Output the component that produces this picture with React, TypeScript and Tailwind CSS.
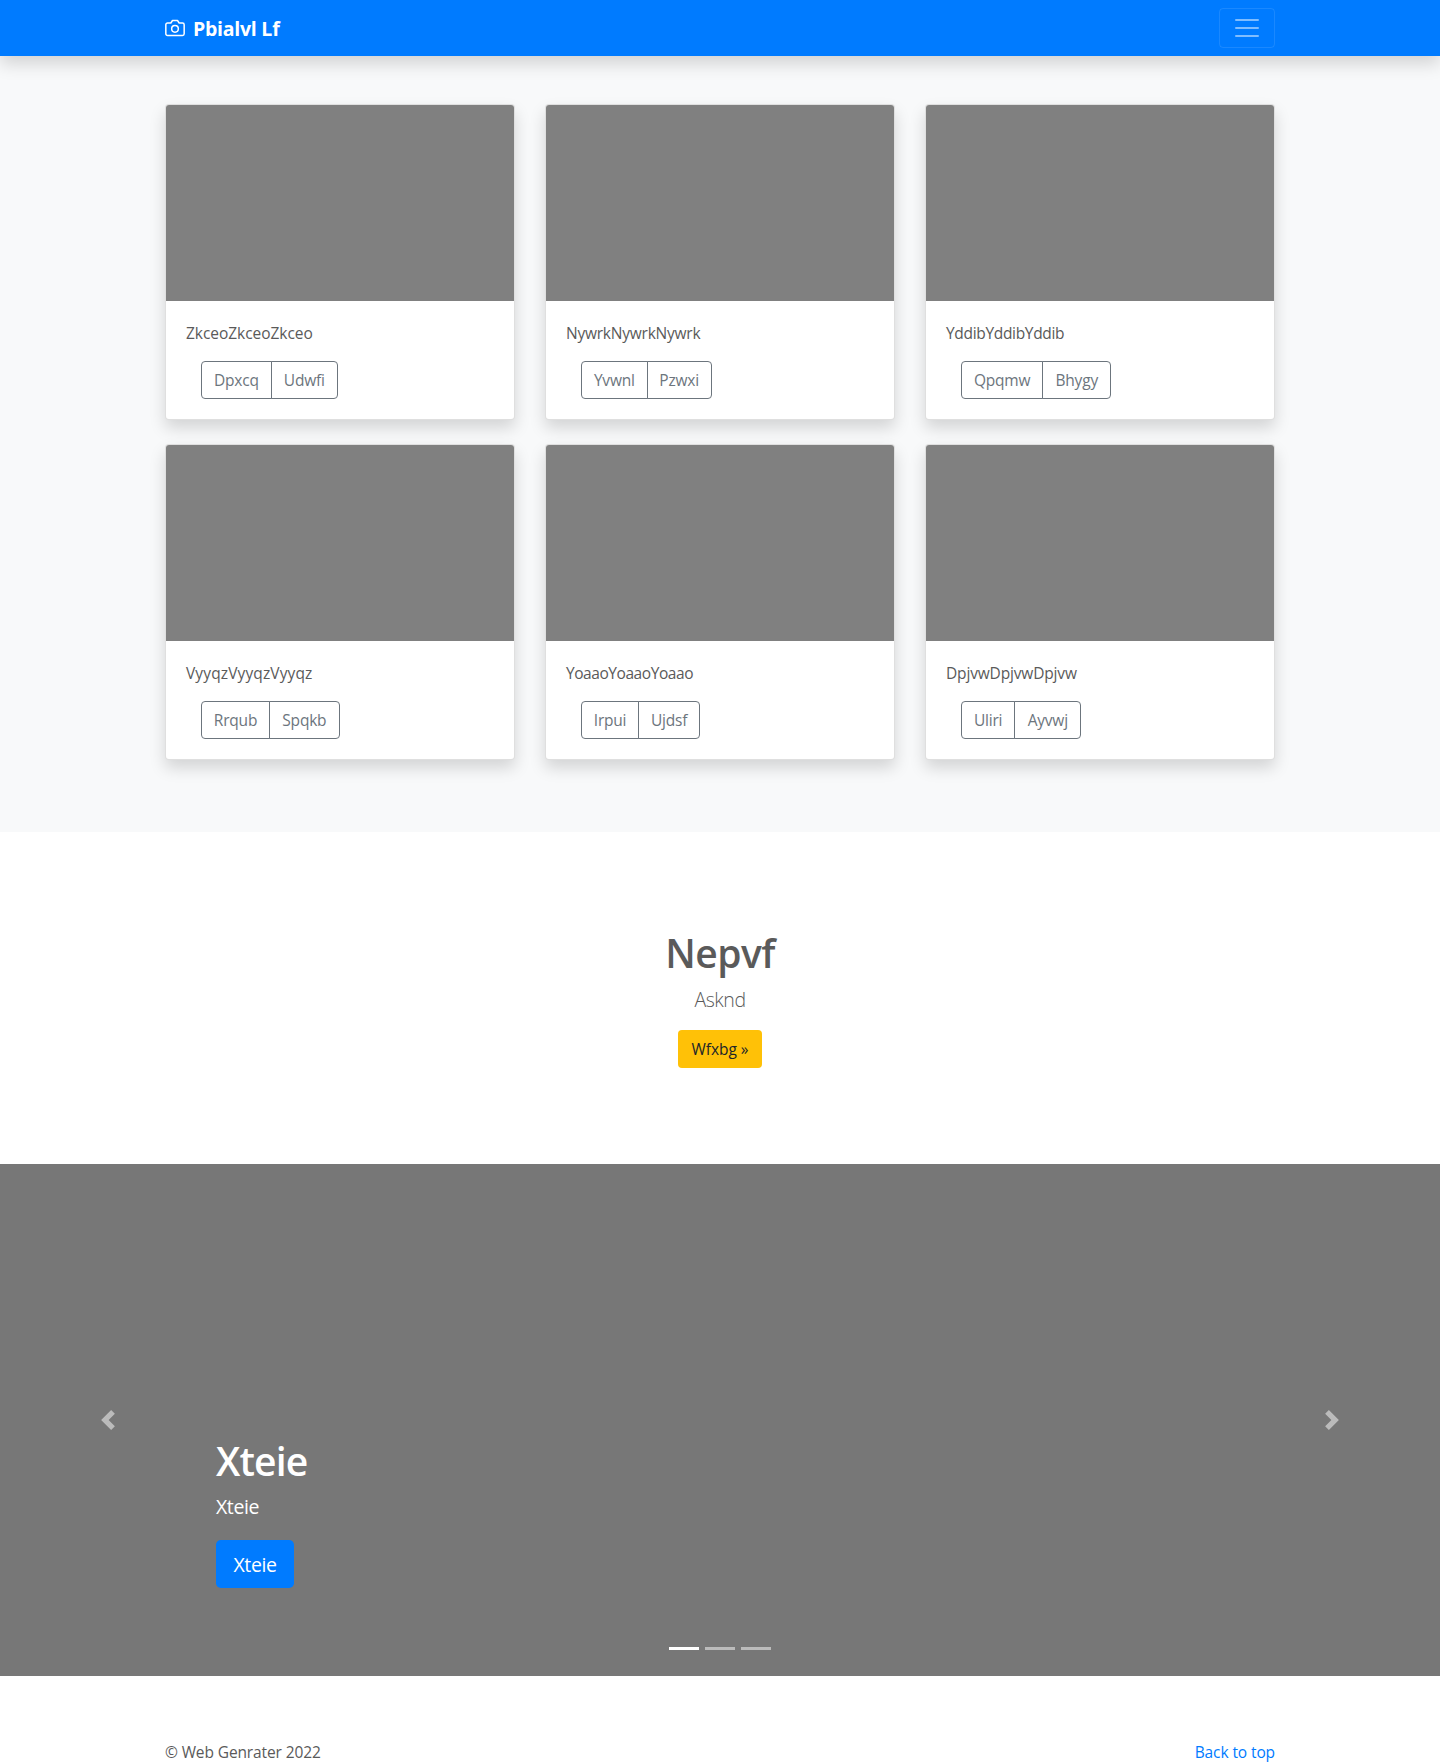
import React from 'react';

type CardData = {
  title: string;
  titleClass: string;
  left: string;
  leftClass: string;
  right: string;
  rightClass: string;
};

const cards: CardData[] = [
  { title: 'ZkceoZkceoZkceo', titleClass: 'tracking-[-0.04px]', left: 'Dpxcq', leftClass: 'w-[70.8px]', right: 'Udwfi', rightClass: 'w-[66.9px]' },
  { title: 'NywrkNywrkNywrk', titleClass: 'tracking-[-0.23px]', left: 'Yvwnl', leftClass: 'w-[66.6px]', right: 'Pzwxi', rightClass: 'w-[65px]' },
  { title: 'YddibYddibYddib', titleClass: 'tracking-[-0.32px]', left: 'Qpqmw', leftClass: 'w-[82.2px]', right: 'Bhygy', rightClass: 'w-[69.1px]' },
  { title: 'VyyqzVyyqzVyyqz', titleClass: 'tracking-[0.13px]', left: 'Rrqub', leftClass: 'w-[69px]', right: 'Spqkb', rightClass: 'w-[70.7px]' },
  { title: 'YoaaoYoaaoYoaao', titleClass: 'tracking-[-0.44px]', left: 'Irpui', leftClass: 'w-[58.1px]', right: 'Ujdsf', rightClass: 'w-[62.1px]' },
  { title: 'DpjvwDpjvwDpjvw', titleClass: 'tracking-[-0.16px]', left: 'Uliri', leftClass: 'w-[54.2px]', right: 'Ayvwj', rightClass: 'w-[67.2px]' },
];

function Navbar() {
  return (
    <header className="relative z-10 h-14 bg-[#007bff] shadow-[0_8px_16px_rgba(0,0,0,0.15)]">
      <div className="mx-auto flex h-full w-[1110px] items-center justify-between">
        <a href="#" className="flex items-center text-white">
          <svg className="mr-2 h-5 w-5" viewBox="0 0 24 24" fill="none" stroke="currentColor" strokeWidth="1.8" strokeLinecap="round" strokeLinejoin="round">
            <path d="M23 19a2 2 0 0 1-2 2H3a2 2 0 0 1-2-2V8a2 2 0 0 1 2-2h4l2-3h6l2 3h4a2 2 0 0 1 2 2z" />
            <circle cx="12" cy="13" r="4" />
          </svg>
          <strong className="pt-0.5 text-[19.5px] leading-[30px] font-bold tracking-[-0.25px]">Pbialvl Lf</strong>
        </a>
        <button className="flex h-10 w-14 items-center justify-center rounded border border-white/10" aria-label="Toggle navigation">
          <svg className="h-[30px] w-[30px] shrink-0" viewBox="0 0 30 30" stroke="rgba(255,255,255,0.5)" strokeWidth="2" strokeLinecap="round">
            <path d="M4 7h22M4 15h22M4 23h22" />
          </svg>
        </button>
      </div>
    </header>
  );
}

function Card({ card }: { card: CardData }) {
  return (
    <article className="h-[316px] overflow-hidden rounded border border-black/[0.125] bg-white shadow-[0_8px_16px_rgba(0,0,0,0.15)]">
      <div className="h-[196px] bg-[#808080]" />
      <div className="p-5">
        <p className={'mb-4 ' + card.titleClass}>{card.title}</p>
        <div className="ml-[15px] flex h-[38px] tracking-[-0.2px] text-[#6c757d]">
          <button className={'shrink-0 rounded-l border border-[#6c757d] ' + card.leftClass}>{card.left}</button>
          <button className={'-ml-px shrink-0 rounded-r border border-[#6c757d] ' + card.rightClass}>{card.right}</button>
        </div>
      </div>
    </article>
  );
}

function Hero() {
  return (
    <section className="flex h-[332px] flex-col items-center pt-[97px]">
      <h1 className="mb-2 text-[39px] leading-[48px] font-semibold tracking-[-0.5px]">Nepvf</h1>
      <p className="mb-[15px] text-[19.5px] leading-[30px] font-light tracking-[-0.45px]">Asknd</p>
      <button className="h-[38px] w-[84px] rounded bg-[#ffc107] tracking-[-0.05px] text-[#212529]">Wfxbg »</button>
    </section>
  );
}

function Carousel() {
  return (
    <section className="relative flex h-[512px] items-center justify-between bg-[#777]">
      <button className="flex w-[216px] justify-center text-white opacity-50" aria-label="Previous">
        <svg className="h-5 w-5" viewBox="0 0 8 8" fill="currentColor">
          <path d="M5.25 0l-4 4 4 4 1.5-1.5L4.25 4l2.5-2.5L5.25 0z" />
        </svg>
      </button>
      <div className="flex-1 self-end pb-[88px] text-left text-white">
        <h1 className="mb-[7px] text-[39px] leading-[48px] font-semibold tracking-[-0.8px]">Xteie</h1>
        <p className="mb-[18px] text-[19.5px] leading-[30px] font-medium tracking-[-0.4px]">Xteie</p>
        <button className="block h-12 w-[78px] rounded-[4.8px] bg-[#007bff] pt-0.5 text-[19.5px] leading-[30px] font-medium tracking-[-0.4px]">Xteie</button>
      </div>
      <button className="flex w-[216px] justify-center text-white opacity-50" aria-label="Next">
        <svg className="h-5 w-5" viewBox="0 0 8 8" fill="currentColor">
          <path d="M2.75 0l-1.5 1.5L3.75 4l-2.5 2.5L2.75 8l4-4-4-4z" />
        </svg>
      </button>
      <div className="absolute inset-x-0 bottom-[26px] flex justify-center gap-1.5">
        <span className="h-[3px] w-[30px] bg-white" />
        <span className="h-[3px] w-[30px] bg-white/50" />
        <span className="h-[3px] w-[30px] bg-white/50" />
      </div>
    </section>
  );
}

export default function App() {
  return (
    <div className="h-[1764px] overflow-hidden bg-white font-['Open_Sans',sans-serif] text-[15.5px] leading-6 text-[#5a5a5a]">
      <Navbar />
      <main>
        <section className="h-[776px] bg-[#f8f9fa] pt-12">
          <div className="mx-auto grid w-[1110px] grid-cols-3 gap-x-[30px] gap-y-6">
            {cards.map((card) => (
              <Card key={card.title} card={card} />
            ))}
          </div>
        </section>
        <Hero />
        <Carousel />
      </main>
      <footer className="mx-auto flex w-[1110px] justify-between pt-16">
        <p className="tracking-[-0.12px]">© Web Genrater 2022</p>
        <a href="#" className="tracking-[-0.1px] text-[#007bff]">Back to top</a>
      </footer>
    </div>
  );
}
